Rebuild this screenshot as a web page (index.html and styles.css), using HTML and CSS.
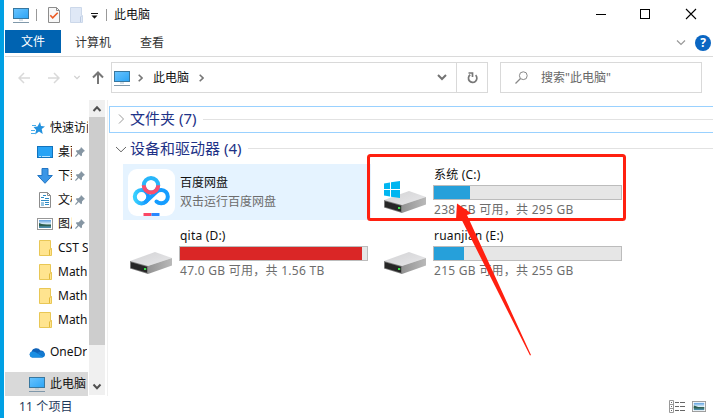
FILE: index.html
```html
<!DOCTYPE html>
<html lang="zh-CN">
<head>
    <meta charset="UTF-8">
    <title>此电脑</title>
    <link rel="stylesheet" href="styles.css">
</head>
<body>
    <!-- Shared icons -->
    <svg class="defs" width="0" height="0">
        <defs>
            <linearGradient id="screen" x1="0" y1="0" x2="1" y2="1">
                <stop offset="0" stop-color="#69c4ff"/>
                <stop offset="1" stop-color="#2ba4f5"/>
            </linearGradient>
            <linearGradient id="driveTop" x1="0" y1="0" x2="1" y2="1">
                <stop offset="0" stop-color="#d2d2d4"/>
                <stop offset="1" stop-color="#e8e8ea"/>
            </linearGradient>
            <linearGradient id="driveSide" x1="0" y1="0" x2="1" y2="0">
                <stop offset="0" stop-color="#939393"/>
                <stop offset="1" stop-color="#b9b9b9"/>
            </linearGradient>
            <linearGradient id="pan" x1="0" y1="0" x2="1" y2="0">
                <stop offset="0" stop-color="#37d0ff"/>
                <stop offset="1" stop-color="#1795ff"/>
            </linearGradient>
            <linearGradient id="photo" x1="0" y1="0" x2="0" y2="1">
                <stop offset="0" stop-color="#5b9ee0"/>
                <stop offset="0.5" stop-color="#dceef8"/>
                <stop offset="0.6" stop-color="#40705f"/>
                <stop offset="1" stop-color="#4b90b8"/>
            </linearGradient>
        </defs>
        <symbol id="pc" viewBox="0 0 16 16">
            <rect x="0.5" y="1.5" width="15" height="10" fill="url(#screen)" stroke="#38779f"/>
            <path d="M6 13h4" stroke="#a9c0cf"/>
            <path d="M0 15.5h16" stroke="#8098aa"/>
        </symbol>
        <symbol id="folder" viewBox="0 0 14 16">
            <path d="M0.5 0.5h11v8h1v7h-12z" fill="#ffe48f" stroke="#e9c755"/>
            <path d="M10.5 15v-5l1.5-1.5" fill="none" stroke="#e2b93b"/>
        </symbol>
        <symbol id="pin" viewBox="0 0 10 10">
            <path d="M6 0l4 4-1.2 0.5-1.8 2v2l-1 0.8-2.2-2.2L0.8 10 0 9.3l2.6-3L0.8 4l0.8-0.8h2L5.5 1.4z" fill="#8696a3"/>
        </symbol>
        <symbol id="picture" viewBox="0 0 16 12">
            <rect x="0.5" y="0.5" width="15" height="11" fill="#fff" stroke="#979797"/>
            <rect x="2" y="2" width="12" height="8" fill="url(#photo)"/>
            <path d="M2 5q3 1 5 1.5t7 0.5v1H2z" fill="#2c5e50"/>
        </symbol>
        <symbol id="drive" viewBox="0 0 42 22">
            <path d="M0 9L25 0 42 6 18 14z" fill="url(#driveTop)"/>
            <path d="M18 14L42 6v7.500L18 22z" fill="url(#driveSide)"/>
            <path d="M0 9l18 5v8L0 16.500z" fill="#7a7a7a"/>
            <path d="M1 10.300l16 4.500v6L1 16z" fill="#262626"/>
            <rect x="14" y="16" width="2.200" height="2" fill="#3be04a"/>
        </symbol>
    </svg>

    <div class="window">
        <div class="titlebar">
            <svg class="pc-icon" width="16" height="16"><use href="#pc"/></svg>
            <span class="sep"></span>
            <svg class="check-icon" width="12" height="16" viewBox="0 0 12 16">
                <path d="M0.500 0.500h8l3 3v12h-11z" fill="#f8f8f8" stroke="#8d8d8d"/>
                <path d="M8.500 0.500v3h3" fill="none" stroke="#8d8d8d"/>
                <path d="M2.300 8.300l2.400 2.500 5-5" fill="none" stroke="#ec5a24" stroke-width="1.600"/>
            </svg>
            <svg class="new-icon" width="13" height="16" viewBox="0 0 13 16">
                <path d="M0.500 0.500h11v8h1v7h-12z" fill="#dfe8f6" stroke="#ccd8ea"/>
                <path d="M10.500 15v-5l1-1" fill="none" stroke="#bccbe2"/>
            </svg>
            <svg class="more-icon" width="7" height="6" viewBox="0 0 7 6">
                <path d="M0 0.500h7" stroke="#111"/>
                <path d="M0.500 2.500h6L3.500 5.800z" fill="#111"/>
            </svg>
            <span class="sep"></span>
            <span class="title">此电脑</span>
            <div class="controls">
                <svg width="12" height="12" viewBox="0 0 12 12"><path d="M1 6.500h10" stroke="#000"/></svg>
                <svg width="12" height="12" viewBox="0 0 12 12"><rect x="1.500" y="1.500" width="9" height="9" fill="none" stroke="#000"/></svg>
                <svg width="12" height="12" viewBox="0 0 12 12"><path d="M1 1l10 10M11 1L1 11" stroke="#000" stroke-width="1.100"/></svg>
            </div>
        </div>

        <div class="ribbon">
            <span class="tab active">文件</span>
            <span class="tab">计算机</span>
            <span class="tab">查看</span>
            <div class="ribbon-right">
                <svg width="10" height="6" viewBox="0 0 10 6"><path d="M1 0.500l4 4 4-4" fill="none" stroke="#999" stroke-width="1.200"/></svg>
                <span class="help">?</span>
            </div>
        </div>

        <div class="navbar">
            <div class="nav-buttons">
                <svg width="12" height="12" viewBox="0 0 12 12"><path d="M12 6H1M6 1L1 6l5 5" fill="none" stroke="#d9d9d9" stroke-width="1.500"/></svg>
                <svg width="12" height="12" viewBox="0 0 12 12"><path d="M0 6h11M6 1l5 5-5 5" fill="none" stroke="#d9d9d9" stroke-width="1.500"/></svg>
                <svg width="6" height="5" viewBox="0 0 6 5"><path d="M0.300 1L3 3.700 5.700 1" fill="none" stroke="#d0d0d0" stroke-width="1.300"/></svg>
                <svg width="12" height="13" viewBox="0 0 12 13"><path d="M6 13V1.500M1 6.500l5-5 5 5" fill="none" stroke="#777" stroke-width="2"/></svg>
            </div>
            <div class="address">
                <svg class="pc-icon" width="16" height="16"><use href="#pc"/></svg>
                <svg width="5" height="8" viewBox="0 0 5 8"><path d="M0.700 0.800L4 4 0.700 7.200" fill="none" stroke="#777" stroke-width="1.600"/></svg>
                <span class="crumb">此电脑</span>
                <svg width="5" height="8" viewBox="0 0 5 8"><path d="M0.700 0.800L4 4 0.700 7.200" fill="none" stroke="#777" stroke-width="1.600"/></svg>
                <svg class="drop" width="10" height="7" viewBox="0 0 10 7"><path d="M1 1l4 4 4-4" fill="none" stroke="#737373" stroke-width="2"/></svg>
                <div class="refresh">
                    <svg width="11" height="12" viewBox="0 0 11 12">
                        <path d="M8.600 3.200A4.200 4.200 0 1 1 3.200 2.800" fill="none" stroke="#777" stroke-width="1.700"/>
                        <path d="M1.500 1h4v4" fill="none" stroke="#777" stroke-width="1.700"/>
                    </svg>
                </div>
            </div>
            <div class="search">
                <svg width="13" height="13" viewBox="0 0 13 13">
                    <circle cx="8.300" cy="4.700" r="3.900" fill="none" stroke="#888"/>
                    <path d="M5.500 7.500L0.500 12.500" stroke="#888" stroke-width="1.200"/>
                </svg>
                <span>搜索"此电脑"</span>
            </div>
        </div>

        <div class="content">
            <div class="sidebar">
                <div class="tree">
                    <div class="node root">
                        <svg width="14" height="13" viewBox="0 0 14 13">
                            <path d="M9 0l1 4 4 0.500-3.300 2.500 1 5-3.700-2.500L4 12.500l1.200-4.500L2.500 5l4-0.500z" fill="#2291de"/>
                            <path d="M1 3.500h4M0 8.500h4M0 11.500h4" stroke="#4baeea"/>
                        </svg>
                        <span class="label">快速访问</span>
                    </div>
                    <div class="node">
                        <svg width="16" height="12" viewBox="0 0 16 12">
                            <rect x="0.500" y="0.500" width="15" height="11" fill="#27a3f5" stroke="#1273bd"/>
                            <path d="M2 10.500h2M5 10.500h8" stroke="#b5e2ff"/>
                        </svg>
                        <span class="label short">桌面</span>
                        <svg class="pin" width="10" height="10"><use href="#pin"/></svg>
                    </div>
                    <div class="node">
                        <svg width="16" height="16" viewBox="0 0 16 16"><path d="M5 0.500h6v7h4.300L8 15.300 0.700 7.500H5z" fill="#3b96e6" stroke="#2376c4"/></svg>
                        <span class="label short">下载</span>
                        <svg class="pin" width="10" height="10"><use href="#pin"/></svg>
                    </div>
                    <div class="node">
                        <svg width="16" height="16" viewBox="0 0 16 16">
                            <path d="M2.500 0.500h8l3 3v12h-11z" fill="#fff" stroke="#8c8c8c"/>
                            <path d="M10.500 0.500v3h3" fill="none" stroke="#8c8c8c"/>
                            <path d="M6 3.500h3M4 5.500h3M8 6.500h4M4 8.500h8M4 11h3M8 10.500h4M4 13h3M8 12.500h4" stroke="#2e8bc4"/>
                        </svg>
                        <span class="label short">文档</span>
                        <svg class="pin" width="10" height="10"><use href="#pin"/></svg>
                    </div>
                    <div class="node">
                        <svg width="16" height="12"><use href="#picture"/></svg>
                        <span class="label short">图片</span>
                        <svg class="pin" width="10" height="10"><use href="#pin"/></svg>
                    </div>
                    <div class="node folder">
                        <svg width="14" height="16"><use href="#folder"/></svg>
                        <span class="label">CST S</span>
                    </div>
                    <div class="node folder">
                        <svg width="14" height="16"><use href="#folder"/></svg>
                        <span class="label">Math</span>
                    </div>
                    <div class="node folder">
                        <svg width="14" height="16"><use href="#folder"/></svg>
                        <span class="label">Math</span>
                    </div>
                    <div class="node folder">
                        <svg width="14" height="16"><use href="#folder"/></svg>
                        <span class="label">Math</span>
                    </div>
                    <div class="node top">
                        <svg width="16" height="11" viewBox="0 0 16 11">
                            <path d="M3 10.500A3 3 0 0 1 2.500 4.800 5 5 0 0 1 11.500 3.500 3.600 3.600 0 0 1 13 10.500z" fill="#0f62b8"/>
                            <path d="M3 10.500A3 3 0 0 1 2.500 4.800Q5 3.800 8 6l6.500 4q-0.500 0.500-1.500 0.500z" fill="#1a8fe3"/>
                            <path d="M8 6l4-1.700q3.500 0.200 4 3.200 0 2-1.500 2.600z" fill="#1379d0"/>
                        </svg>
                        <span class="label">OneDr</span>
                    </div>
                    <div class="node top selected">
                        <svg width="16" height="16"><use href="#pc"/></svg>
                        <span class="label">此电脑</span>
                    </div>
                </div>
                <div class="scrollbar">
                    <svg width="16" height="17" viewBox="0 0 16 17"><path d="M4.500 11L8 7.300 11.500 11" fill="none" stroke="#505050" stroke-width="2"/></svg>
                    <div class="thumb"></div>
                    <svg width="16" height="17" viewBox="0 0 16 17"><path d="M4.500 6.500L8 10.200 11.500 6.500" fill="none" stroke="#505050" stroke-width="2"/></svg>
                </div>
            </div>

            <div class="main">
                <div class="group focused">
                    <svg width="10" height="10" viewBox="0 0 10 10"><path d="M3 0.500L7.500 5 3 9.500" fill="none" stroke="#999"/></svg>
                    <span class="group-name">文件夹 (7)</span>
                    <span class="rule"></span>
                </div>
                <div class="group">
                    <svg width="10" height="10" viewBox="0 0 10 10"><path d="M0 3l5 4.800L10 3" fill="none" stroke="#666"/></svg>
                    <span class="group-name">设备和驱动器 (4)</span>
                    <span class="rule"></span>
                </div>
                <div class="tiles">
                    <div class="tile app">
                        <svg class="tile-icon" width="47" height="47" viewBox="0 0 47 47">
                            <rect width="47" height="47" rx="9" fill="#fff"/>
                            <circle cx="23" cy="16.200" r="7.200" fill="none" stroke="#28b6fa" stroke-width="4"/>
                            <circle cx="13.500" cy="27.700" r="6.700" fill="none" stroke="url(#pan)" stroke-width="4"/>
                            <path d="M18 32.600L28.500 22.800a6.700 6.700 0 1 1 0 9.700" fill="none" stroke="#159dff" stroke-width="4" stroke-linecap="round"/>
                            <path d="M15.800 16.200a7.200 7.200 0 0 0 14.400 0" fill="none" stroke="#fa4d6d" stroke-width="4"/>
                            <path d="M15.500 45.500h8" stroke="#fa4765" stroke-width="3"/>
                            <path d="M23.500 45.500h8" stroke="#2688ff" stroke-width="3"/>
                        </svg>
                        <div class="info">
                            <div class="name">百度网盘</div>
                            <div class="detail">双击运行百度网盘</div>
                        </div>
                    </div>
                    <div class="tile">
                        <svg class="tile-icon" width="47" height="40" viewBox="0 0 47 40">
                            <use href="#drive" x="2" y="17" width="42" height="22"/>
                            <path d="M2 9.500l6-1v6.500H2zM9 8.300L18 7v8H9zM2 16h6v6.500l-6-1zM9 16h9v8l-9-1.300z" fill="#00b6f1"/>
                        </svg>
                        <div class="info">
                            <div class="name">系统 (C:)</div>
                            <div class="bar"><div class="fill" style="width: 19%"></div></div>
                            <div class="detail">238 GB 可用，共 295 GB</div>
                        </div>
                    </div>
                    <div class="tile">
                        <svg class="tile-icon" width="47" height="40" viewBox="0 0 47 40">
                            <use href="#drive" x="2" y="17" width="42" height="22"/>
                        </svg>
                        <div class="info">
                            <div class="name">qita (D:)</div>
                            <div class="bar"><div class="fill full" style="width: 97.300%"></div></div>
                            <div class="detail">47.0 GB 可用，共 1.56 TB</div>
                        </div>
                    </div>
                    <div class="tile">
                        <svg class="tile-icon" width="47" height="40" viewBox="0 0 47 40">
                            <use href="#drive" x="2" y="17" width="42" height="22"/>
                        </svg>
                        <div class="info">
                            <div class="name">ruanjian (E:)</div>
                            <div class="bar"><div class="fill" style="width: 16.300%"></div></div>
                            <div class="detail">215 GB 可用，共 255 GB</div>
                        </div>
                    </div>
                </div>
            </div>
        </div>

        <div class="statusbar">
            <span class="count">11 个项目</span>
            <div class="views">
                <svg width="16" height="13" viewBox="0 0 16 13">
                    <path d="M0.500 0.500h4v12h-4zM0.500 4.500h4M0.500 8.500h4" fill="none" stroke="#999"/>
                    <path d="M2 2.500h1M2 6.500h1M2 10.500h1M6 2.500h4M11 2.500h5M6 6.500h4M11 6.500h5M6 10.500h4M11 10.500h5" stroke="#666"/>
                </svg>
                <svg width="14" height="11" viewBox="0 0 16 12" preserveAspectRatio="none"><use href="#picture"/></svg>
            </div>
        </div>
    </div>

    <!-- Annotation over the C: drive -->
    <svg class="annotation" width="713" height="418" viewBox="0 0 713 418">
        <rect x="368.500" y="155.500" width="256" height="64" rx="2" fill="none" stroke="#ff2010" stroke-width="3"/>
        <path d="M457 203.500L471.500 213.500 467 215 531 355 530 355.500 461 218.500 456 219.500z" fill="#ff2010"/>
    </svg>
</body>
</html>
```
FILE: styles.css
```css
* {
    box-sizing: border-box;
}
body {
    margin: 0;
    width: 713px;
    height: 418px;
    overflow: hidden;
    font-family: "Noto Sans", "Noto Sans CJK SC", sans-serif;
    font-size: 12px;
    line-height: 18px;
    color: #111;
    background: #fff;
}
svg {
    display: block;
    flex: none;
}
.defs {
    position: absolute;
}
.window {
    display: flex;
    flex-direction: column;
    height: 418px;
    padding-left: 1px;
    border-left: 4px solid #00a0e4;
    white-space: nowrap;
}

/* Title bar */
.titlebar {
    display: flex;
    align-items: center;
    height: 30px;
    padding: 0 16px 0 8px;
}
.sep {
    width: 1px;
    height: 12px;
    background: #999;
}
.titlebar .pc-icon {
    margin-right: 7px;
}
.check-icon {
    margin-left: 11px;
}
.new-icon {
    margin-left: 10px;
}
.more-icon {
    margin: 2px 8px 0 8px;
}
.title {
    margin-left: 7px;
}
.controls {
    display: flex;
    gap: 33px;
    margin-left: auto;
    margin-top: -2px;
}
.controls svg:nth-child(2) {
    margin: 0 1px 0 -1px;
}

/* Ribbon tabs */
.ribbon {
    display: flex;
    height: 27px;
    border-bottom: 1px solid #dadada;
}
.tab {
    height: 23px;
    padding: 4px 14px 0;
    line-height: 18px;
    color: #333;
}
.tab.active {
    width: 56px;
    padding: 3px 16px 0;
    color: #fff;
    background: #0063b1;
}
.tab + .tab {
    padding-right: 15px;
}
.ribbon-right {
    display: flex;
    align-items: center;
    gap: 9px;
    margin-left: auto;
    padding-right: 2px;
}
.help {
    width: 16px;
    height: 16px;
    border-radius: 50%;
    background: #0a66c2;
    color: #fff;
    font-weight: bold;
    line-height: 16px;
    text-align: center;
}

/* Address bar */
.navbar {
    display: flex;
    height: 43px;
    padding: 5px 11px 0 13px;
}
.nav-buttons {
    display: flex;
    align-items: center;
    width: 93px;
    height: 31px;
}
.nav-buttons svg:nth-child(2) {
    margin-left: 18px;
}
.nav-buttons svg:nth-child(3) {
    margin-left: 14px;
}
.nav-buttons svg:nth-child(4) {
    margin-left: 12px;
}
.address {
    display: flex;
    align-items: center;
    width: 377px;
    height: 31px;
    padding-left: 2px;
    border: 1px solid #d9d9d9;
}
.address .pc-icon {
    margin-right: 8px;
}
.crumb {
    margin: 0 10px;
}
.drop {
    margin-left: auto;
    margin-right: 9px;
}
.refresh {
    display: flex;
    align-items: center;
    justify-content: center;
    width: 31px;
    height: 29px;
    border-left: 1px solid #d9d9d9;
}
.search {
    display: flex;
    align-items: center;
    gap: 13px;
    width: 202px;
    height: 31px;
    margin-left: 12px;
    padding-left: 14px;
    border: 1px solid #d9d9d9;
    color: #666;
}

/* Navigation tree */
.content {
    display: flex;
    height: 296px;
}
.sidebar {
    display: flex;
    width: 103px;
    border-right: 1px solid #f0f0f0;
}
.tree {
    width: 84px;
    padding-top: 16px;
    overflow: hidden;
}
.node {
    display: flex;
    align-items: center;
    width: 83px;
    height: 24px;
    padding-left: 32px;
    overflow: hidden;
}
.node.root {
    padding-left: 26px;
}
.label {
    margin-left: 5px;
    overflow: hidden;
}
.short {
    width: 14px;
}
.pin {
    margin-left: 3px;
}
.node.folder {
    padding-left: 34px;
}
.node.top {
    margin-top: 8px;
    padding-left: 24px;
}
.node.selected {
    background: #d9d9d9;
}
.scrollbar {
    display: flex;
    flex-direction: column;
    width: 16px;
    height: 295px;
    background: #f0f0f0;
}
.thumb {
    height: 228px;
    margin-bottom: auto;
    background: #cdcdcd;
}

/* File list */
.main {
    flex: 1;
    padding: 6px 0 0 1px;
}
.group {
    display: flex;
    align-items: center;
    height: 27px;
    padding-left: 6px;
    border: 1px solid transparent;
    border-right: 0;
    color: #1e3287;
    font-size: 15px;
    line-height: 22px;
}
.group.focused {
    border-color: #99d1ff;
    padding-bottom: 1px;
}
.group + .group {
    margin-top: 2px;
}
.group-name {
    margin: -2px 7px 0 4px;
}
.rule {
    flex: 1;
    height: 1px;
    background: #e2e2e2;
}
.tiles {
    display: grid;
    grid-template-columns: 248px 248px;
    gap: 5px 6px;
    padding: 2px 0 0 14px;
}
.tile {
    display: flex;
    height: 56px;
    padding: 2px 0 0 5px;
}
.tile-icon {
    margin-top: 8px;
}
.info {
    width: 189px;
    margin-left: 4px;
}
.name,
.detail {
    padding-left: 1px;
}
.name {
    height: 19px;
    letter-spacing: 0.2px;
}
.detail {
    padding-top: 1px;
    color: #6d6d6d;
    letter-spacing: 0.27px;
}
.bar {
    height: 15px;
    border: 1px solid #bcbcbc;
    background: #e6e6e6;
}
.fill {
    height: 13px;
    background: #26a0da;
}
.fill.full {
    background: #da2626;
}
.tile.app {
    padding-top: 5px;
    background: #e5f3ff;
}
.app .tile-icon {
    margin-top: 0;
}
.app .info {
    padding-top: 5px;
}
.app .name,
.app .detail {
    padding-top: 0;
    letter-spacing: 0;
}

/* Status bar */
.statusbar {
    display: flex;
    justify-content: space-between;
    height: 22px;
    padding: 2px 7px 0 14px;
    color: #1e395b;
}
.count {
    letter-spacing: 0.15px;
}
.views {
    display: flex;
    align-items: center;
    gap: 7px;
    height: 17px;
}

/* Drawn over the window */
.annotation {
    position: absolute;
    left: 0;
    top: 0;
}
```
